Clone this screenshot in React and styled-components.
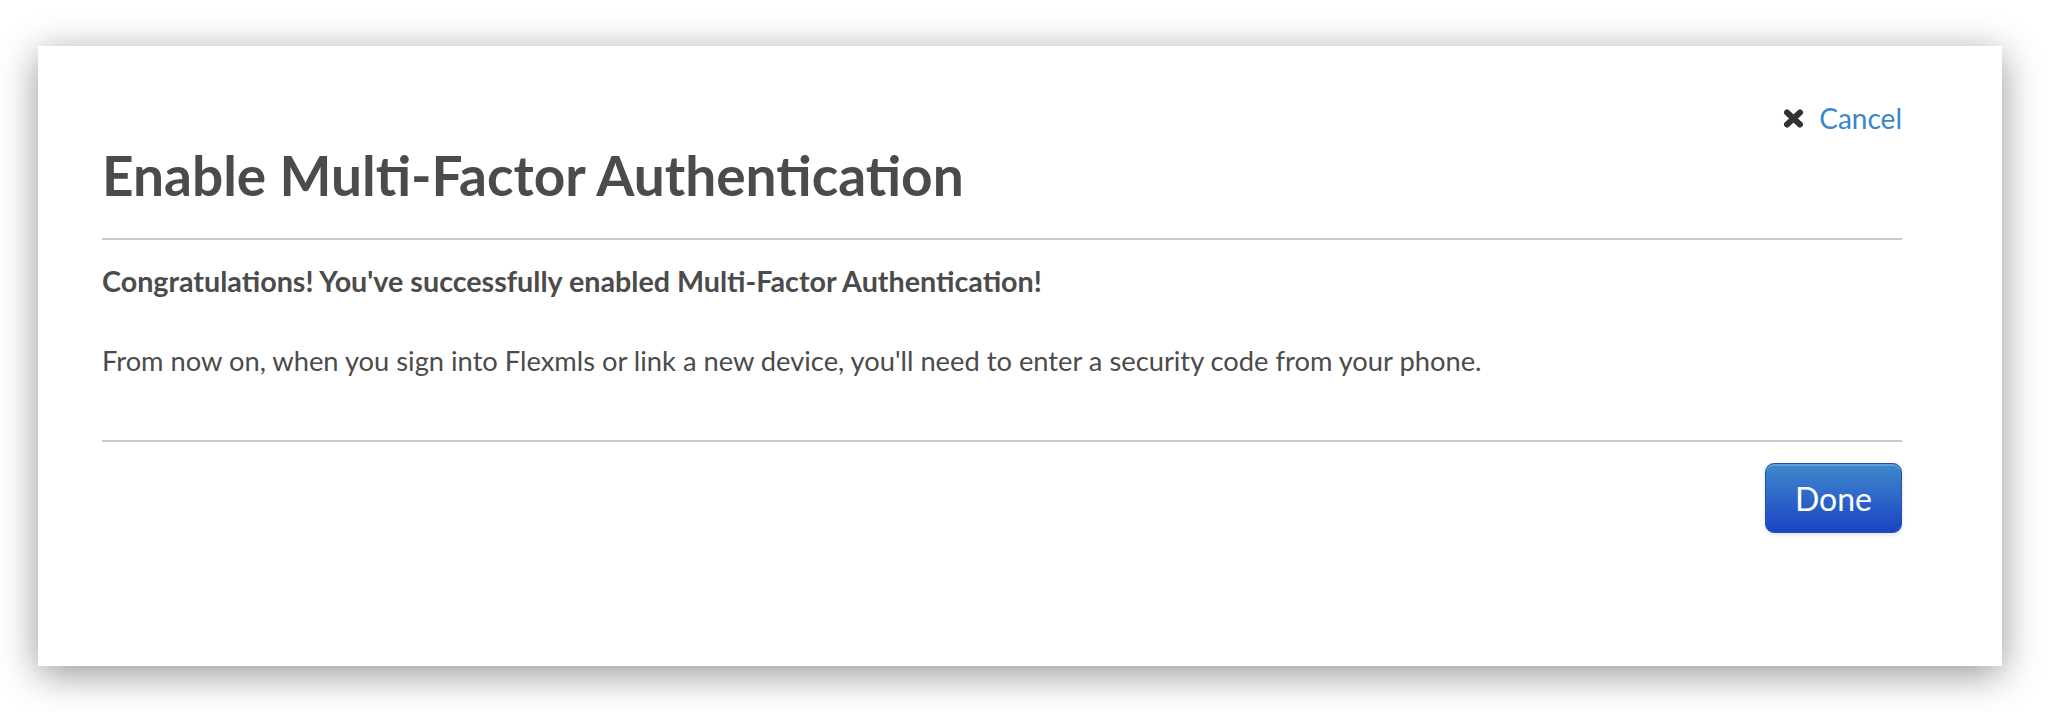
import React from 'react';
import styled, { createGlobalStyle } from 'styled-components';

const GlobalStyle = createGlobalStyle`
  html, body {
    margin: 0;
    padding: 0;
    background: #ffffff;
  }
  body {
    font-family: Lato, "Open Sans", "Liberation Sans", sans-serif;
    color: #4b4b4b;
  }
`;

const Page = styled.div`
  padding: 46px 54px 46px 38px;
  box-sizing: border-box;
  width: 2056px;
  height: 712px;
`;

const Modal = styled.div`
  width: 1964px;
  height: 620px;
  box-sizing: border-box;
  background: #fff;
  padding: 52px 100px 0 64px;
  box-shadow: 0 8px 36px rgba(0, 0, 0, 0.42);
`;

const CancelRow = styled.div`
  display: flex;
  justify-content: flex-end;
  align-items: center;
  height: 40px;
`;

const CancelLink = styled.a`
  display: flex;
  align-items: center;
  gap: 15px;
  font-size: 28px;
  color: #3a86c8;
  text-decoration: none;
  cursor: pointer;
`;

const Title = styled.h1`
  margin: 5px 0 0;
  font-size: 55px;
  line-height: 64px;
  font-weight: 700;
  color: #4b4b4b;
`;

const Rule = styled.hr`
  border: 0;
  height: 2px;
  background: #c9c9c9;
  margin: ${p => p.$top}px 0 0;
`;

const Text = styled.p`
  margin: ${p => p.$top}px 0 0;
  font-size: ${p => (p.$bold ? 28.7 : 27.3)}px;
  line-height: 36px;
  font-weight: ${p => (p.$bold ? 700 : 400)};
  color: #4b4b4b;
`;

const Footer = styled.div`
  display: flex;
  justify-content: flex-end;
  margin-top: 21px;
`;

const DoneButton = styled.button`
  width: 137px;
  height: 70px;
  border-radius: 9px;
  border: 1px solid #2350b0;
  background: linear-gradient(#3e89cc, #1b43c3);
  box-shadow: inset 0 2px 0 rgba(255, 255, 255, 0.18), 0 2px 4px rgba(0, 0, 0, 0.12);
  color: #fff;
  font-family: inherit;
  font-size: 32px;
  cursor: pointer;
`;

function CloseIcon() {
  return (
    <svg width="21" height="19" viewBox="0 0 21 19">
      <path d="M4 3.5 L17 15.5 M17 3.5 L4 15.5" stroke="#333" strokeWidth="6" strokeLinecap="round" />
    </svg>
  );
}

export default function App() {
  return (
    <>
      <GlobalStyle />
      <Page>
        <Modal>
          <CancelRow>
            <CancelLink>
              <CloseIcon />
              Cancel
            </CancelLink>
          </CancelRow>
          <Title>Enable Multi-Factor Authentication</Title>
          <Rule $top={31} />
          <Text $bold $top={23}>Congratulations! You've successfully enabled Multi-Factor Authentication!</Text>
          <Text $top={44}>
            From now on, when you sign into Flexmls or link a new device, you'll need to enter a security code from your phone.
          </Text>
          <Rule $top={61} />
          <Footer>
            <DoneButton>Done</DoneButton>
          </Footer>
        </Modal>
      </Page>
    </>
  );
}
